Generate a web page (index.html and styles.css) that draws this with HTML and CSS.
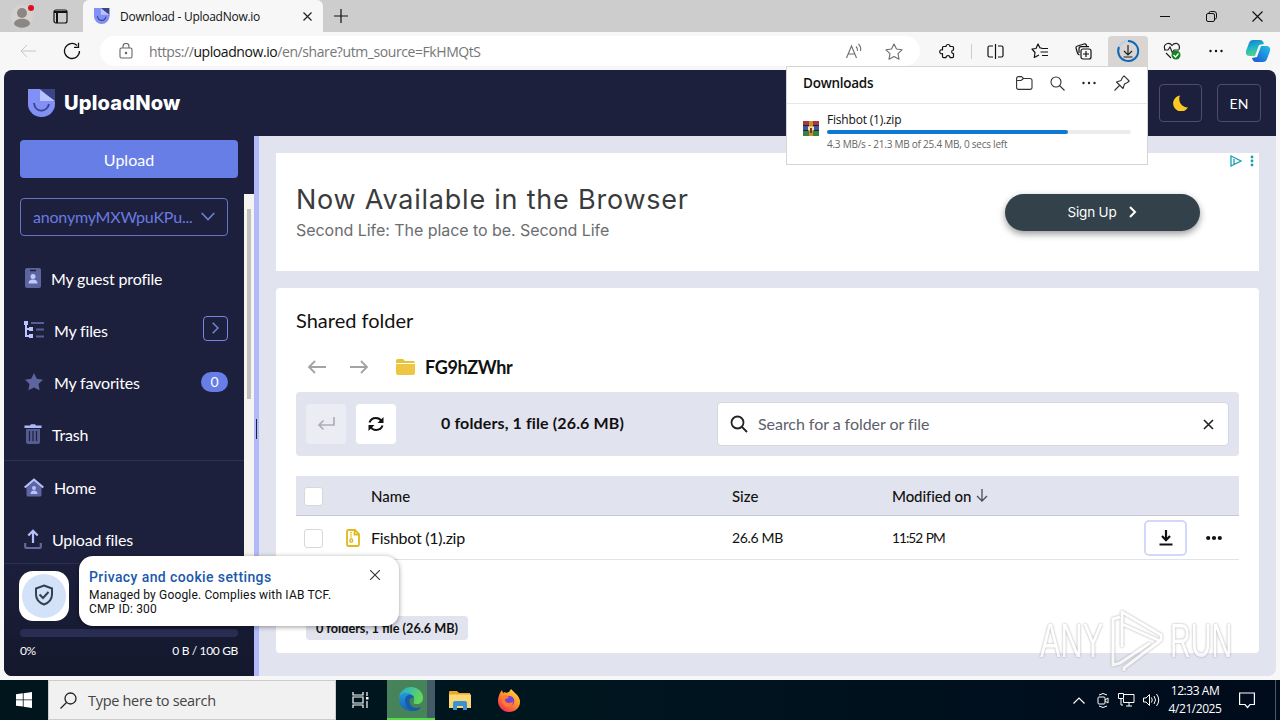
FILE: index.html
```html
<!DOCTYPE html>
<html lang="en">
<head>
  <meta charset="UTF-8">
  <meta name="viewport" content="width=device-width, initial-scale=1">
  <title>Download - UploadNow.io</title>
  <link rel="stylesheet" href="styles.css">
</head>
<body>
  <!-- Shared logo -->
  <svg class="defs" width="0" height="0">
    <symbol id="logo" viewBox="0 0 28 28">
      <path d="M12 0H27V14Z" fill="#3c4488"/>
      <path d="M0 0H12L27 13V15A13.5 13 0 0 1 0 15Z" fill="#8290f5"/>
      <path d="M12 1V12H27Z" fill="#b9c3ff"/>
      <path d="M6 14C7 24 19 24 21 15" fill="none" stroke="#3c4690" stroke-width="2"/>
    </symbol>
  </svg>

  <!-- Browser tabs -->
  <div class="titlebar">
    <div class="tab-tools">
      <svg class="avatar" width="28" height="28" viewBox="0 0 28 28">
        <circle cx="14" cy="14" r="11" fill="#d6d2cf"/>
        <circle cx="14" cy="11" r="5" fill="#8c8784"/>
        <path d="M6 22c0-7 16-7 16 0c-3 5-13 5-16 0z" fill="#8c8784"/>
        <circle cx="23" cy="6" r="3" fill="#d9121c"/>
      </svg>
      <svg width="15" height="15" viewBox="0 0 15 15" fill="none" stroke="#111" stroke-width="1.2">
        <rect x="1" y="1" width="13" height="13" rx="2"/><path d="M1 3h13M4 4v10" stroke-width="2"/>
      </svg>
    </div>
    <div class="tab">
      <svg width="16" height="16"><use href="#logo"/></svg>
      <span class="tab-title">Download - UploadNow.io</span>
      <svg width="9" height="9" viewBox="0 0 9 9" stroke="#222" stroke-width="1.2"><path d="M.5.5l8 8M8.500.5l-8 8"/></svg>
    </div>
    <svg class="new-tab" width="14" height="14" viewBox="0 0 14 14" stroke="#111" stroke-width="1.2"><path d="M7 0v14M0 7h14"/></svg>
    <div class="window-buttons">
      <svg class="minimize" width="10" height="10" viewBox="0 0 10 10" stroke="#111"><path d="M0 5.500h10"/></svg>
      <svg width="11" height="11" viewBox="0 0 11 11" fill="none" stroke="#111"><rect x=".5" y="2.500" width="8" height="8" rx="1.500"/><path d="M3 2.500V2Q3 .5 4.500.5H8Q10.500.5 10.500 3v3.500Q10.500 8 9 8"/></svg>
      <svg width="11" height="11" viewBox="0 0 11 11" stroke="#111" stroke-width="1.200"><path d="M.5.5l10 10M10.500.5l-10 10"/></svg>
    </div>
  </div>

  <!-- Browser toolbar -->
  <div class="toolbar">
    <div class="nav-btn"><svg width="16" height="14" viewBox="0 0 16 14" fill="none" stroke="#c6c6c6"><path d="M16 7H1M7 1L1 7l6 6"/></svg></div>
    <div class="nav-btn"><svg width="18" height="18" viewBox="0 0 18 18" fill="none" stroke="#111" stroke-width="1.300"><path d="M16.500 9a7.500 7.500 0 1 1-2.500-5.600M15.500.8v4.500h-4.500"/></svg></div>
    <div class="address">
      <svg width="14" height="16" viewBox="0 0 14 16" fill="none" stroke="#666" stroke-width="1.100"><rect x="1" y="5" width="12" height="10" rx="1.500"/><path d="M4 5V3.500a3 3 0 0 1 6 0V5"/><circle cx="7" cy="10" r=".7" fill="#666"/></svg>
      <span class="url">https://<b>uploadnow.io</b>/en/share?utm_source=FkHMQtS</span>
      <svg class="read" width="18" height="16" viewBox="0 0 18 16" fill="none" stroke="#6d6d6d" stroke-width="1.100"><path d="M1.500 15L6.500 3l5 12M3.200 11h6.600M11 3.500q2 2 1.500 4.500M13.500 1q3 3 2 7"/></svg>
      <svg class="fav" width="18" height="17" viewBox="0 0 18 17" fill="none" stroke="#6d6d6d" stroke-width="1.100" stroke-linejoin="round"><path d="M9 1l2.500 5 5.500.8-4 3.900 1 5.500L9 13.600l-5 2.600 1-5.500L1 6.800 6.500 6z"/></svg>
    </div>
    <div class="tools">
      <div class="tool"><svg width="17" height="17" viewBox="0 0 17 17" fill="none" stroke="#111" stroke-width="1.200" stroke-linejoin="round"><path d="M4.500 3.500H7a2 2 0 0 1 4 0h2.500q1 0 1 1V7a1.800 1.800 0 1 0 0 3.600v3q0 1-1 1H11a2 2 0 0 0-4 0H4.500q-1 0-1-1V10.600a2 2 0 1 1 0-3.700V4.500q0-1 1-1z"/></svg></div>
      <div class="sep"></div>
      <div class="tool"><svg width="17" height="15" viewBox="0 0 17 15" fill="none" stroke="#111" stroke-width="1.200"><path d="M6 2H2.500Q1 2 1 3.500v8Q1 13 2.500 13H6M11 2h3.500Q16 2 16 3.500v8q0 1.500-1.500 1.500H11M8.500 0v15"/></svg></div>
      <div class="tool"><svg width="17" height="16" viewBox="0 0 17 16" fill="none" stroke="#111" stroke-width="1.200" stroke-linejoin="round"><path d="M11 5L9 5 7 1 5 5.500 1 6l3 3.500-.7 5L8 12M10.500 5.500H17M9.500 9H17M11 12.500h6"/></svg></div>
      <div class="tool"><svg width="17" height="17" viewBox="0 0 17 17" fill="none" stroke="#111" stroke-width="1.200"><rect x="6" y="6" width="10" height="10" rx="2"/><path d="M11 8v6M8 11h6M4.500 12Q3 11.500 2.500 10L1 5Q.7 3.500 2.500 3L9 1q2-.5 2.500 1.500l.3 1M4 10V6q0-2.300 2-2.300h8"/></svg></div>
      <div class="tool active"><svg width="24" height="24" viewBox="0 0 24 24" fill="none" stroke="#222"><circle cx="12" cy="12" r="10" stroke="#b8cfe4" stroke-width="2"/><path d="M12 2a10 10 0 1 1-9 6" stroke="#1268b3" stroke-width="2"/><path d="M12 6v9.500M8 12l4 4 4-4M7.500 18h9" stroke-width="1.200"/></svg></div>
      <div class="tool"><svg width="18" height="18" viewBox="0 0 18 18" fill="none" stroke="#222" stroke-width="1.200"><path d="M2 8Q0 2.500 4.500 1.500 7.500 1 9 3.500 11 1 14 1.500q3.500 1.500 2 6M1 8h4l2-3 2.500 6L11 8h5M3 11l5 5"/><circle cx="13" cy="13" r="4.500" fill="#168322" stroke="none"/><path d="M10.500 13l2 2 3-3.500" stroke="#fff"/></svg></div>
      <div class="tool"><svg width="14" height="4" viewBox="0 0 14 4" fill="#111"><circle cx="1.500" cy="2" r="1.200"/><circle cx="7" cy="2" r="1.200"/><circle cx="12.500" cy="2" r="1.200"/></svg></div>
      <div class="tool copilot">
        <svg width="26" height="24" viewBox="0 0 26 24">
          <defs>
            <linearGradient id="cpA" x1="0" y1="0" x2=".3" y2="1"><stop offset="0" stop-color="#1c74d8"/><stop offset=".5" stop-color="#18b5c8"/><stop offset="1" stop-color="#58d08a"/></linearGradient>
            <linearGradient id="cpB" x1="1" y1="0" x2="0" y2="1"><stop offset="0" stop-color="#20c3e5"/><stop offset="1" stop-color="#1d52d8"/></linearGradient>
          </defs>
          <path d="M8 1h7q3 0 4 4l-5 1-4 11H5q-5 0-4-5L4 4q1-3 4-3z" fill="url(#cpA)"/>
          <path d="M18 23h-7q-3 0-4-4l5-1 4-11h5q5 0 4 5l-3 8q-1 3-4 3z" fill="url(#cpB)"/>
        </svg>
      </div>
    </div>
  </div>

  <!-- UploadNow page -->
  <div class="page">
    <header class="site-header">
      <div class="brand"><svg width="28" height="28"><use href="#logo"/></svg><span>UploadNow</span></div>
      <div class="header-actions">
        <div class="hbtn"><svg width="16" height="16" viewBox="0 0 16 16"><path d="M7 .5A8 8 0 1 0 15 12.500 8.500 8.500 0 0 1 7 .5z" fill="#fdc921"/></svg></div>
        <div class="hbtn lang">EN</div>
      </div>
    </header>

    <div class="layout">
      <aside class="sidebar">
        <div class="upload">Upload</div>
        <div class="side-scroll">
          <div class="menu">
            <div class="account"><span>anonymyMXWpuKPu...</span><svg width="14" height="9" viewBox="0 0 14 9" fill="none" stroke="#6f80d8" stroke-width="1.600"><path d="M.7 1L7 7.500 13.300 1"/></svg></div>
            <a class="item i-profile"><svg width="16" height="20" viewBox="0 0 16 20"><rect width="16" height="20" rx="2" fill="#5d659f"/><path d="M5 2.500h6" stroke="#1c203c" stroke-width="1.500"/><circle cx="8" cy="8.500" r="2.500" fill="#bfc8ff"/><path d="M3.500 15.500q0-4 4.500-4t4.500 4z" fill="#bfc8ff"/></svg><span>My guest profile</span></a>
            <a class="item"><svg width="20" height="18" viewBox="0 0 20 18" fill="none"><path d="M2 1v14h4M2 8h4" stroke="#bac5ff" stroke-width="2"/><path d="M0 0h4v4H0zM5 6h4v4H5zM5 13h4v4H5z" fill="#bac5ff"/><path d="M7 2h13M12 8.500h8M12 15.500h8" stroke="#575e96" stroke-width="2"/></svg><span>My files</span><i class="open"><svg width="7" height="12" viewBox="0 0 7 12" fill="none" stroke="#7685df" stroke-width="1.500"><path d="M.7.7L6 6 .7 11.300"/></svg></i></a>
            <a class="item"><svg width="20" height="20" viewBox="0 0 20 20"><path d="M10 1l2.800 5.800 6.200.9-4.500 4.400 1.100 6.200L10 15.400l-5.600 2.900 1.100-6.200L1 7.700l6.200-.9z" fill="#5e64a0"/></svg><span>My favorites</span><i class="count">0</i></a>
            <a class="item"><svg width="18" height="20" viewBox="0 0 18 20"><path d="M2 5h14v13q0 2-2 2H4q-2 0-2-2z" fill="#555c92"/><path d="M5.500 7v10M9 7v10M12.500 7v10" stroke="#1c203c" stroke-width="1.200"/><path d="M.5 1.500H6L7 .3h4l1 1.200h5.500V4H.5z" fill="#aeb9f5"/></svg><span>Trash</span></a>
            <div class="rule"></div>
            <a class="item"><svg width="20" height="19" viewBox="0 0 20 19"><path d="M2.500 9L10 3l7.500 6v8q0 1.500-1.500 1.500H4Q2.500 18.500 2.500 17z" fill="#5e66a0"/><path d="M.7 9.500L10 1.700l9.300 7.800" fill="none" stroke="#b6c1ff" stroke-width="2.200"/><circle cx="10" cy="10" r="2" fill="#b6c1ff"/><path d="M6.500 16q0-3.500 3.500-3.500t3.500 3.500z" fill="#b6c1ff"/></svg><span>Home</span></a>
            <a class="item"><svg width="18" height="20" viewBox="0 0 18 20" fill="none"><path d="M1.200 14v3.500q0 1.500 1.500 1.500h12.600q1.500 0 1.500-1.500V14" stroke="#626a9f" stroke-width="2.200"/><path d="M9 14V2M4.300 6.500L9 1.800l4.700 4.700" stroke="#b6c1ff" stroke-width="2.200"/></svg><span>Upload files</span></a>
          </div>
          <div class="scrollbar"><div class="thumb"></div></div>
        </div>
        <div class="storage">
          <div class="meter"></div>
          <div class="storage-text"><span>0%</span><span>0 B / 100 GB</span></div>
        </div>
      </aside>
      <div class="splitter"><div class="grip"></div></div>

      <main class="content">
        <section class="ad">
          <div class="ad-text">
            <h1>Now Available in the Browser</h1>
            <p>Second Life: The place to be. Second Life</p>
          </div>
          <div class="signup"><span>Sign Up</span><svg width="8" height="12" viewBox="0 0 8 12" fill="none" stroke="#fff" stroke-width="2"><path d="M1 1l5 5-5 5"/></svg></div>
          <div class="adchoices">
            <svg width="12" height="12" viewBox="0 0 12 12" fill="none" stroke="#16a0b8" stroke-width="1.300"><path d="M1 1l10 5-10 5zM4 4v5"/></svg>
            <svg width="4" height="12" viewBox="0 0 4 12" fill="#16a0b8"><circle cx="2" cy="2" r="1.400"/><circle cx="2" cy="6" r="1.400"/><circle cx="2" cy="10" r="1.400"/></svg>
          </div>
        </section>

        <section class="card">
          <h2>Shared folder</h2>
          <div class="crumbs">
            <svg width="20" height="14" viewBox="0 0 20 14" fill="none" stroke="#a3a3a3" stroke-width="1.800"><path d="M19 7H2M8 1L2 7l6 6"/></svg>
            <svg width="20" height="14" viewBox="0 0 20 14" fill="none" stroke="#a3a3a3" stroke-width="1.800"><path d="M1 7h17M12 1l6 6-6 6"/></svg>
            <svg class="folder" width="19" height="16" viewBox="0 0 19 16"><path d="M0 2Q0 0 2 0h5l2 2h8q2 0 2 2H0z" fill="#e9c233"/><path d="M0 5h19v9q0 2-2 2H2q-2 0-2-2z" fill="#eec643"/></svg>
            <b>FG9hZWhr</b>
          </div>
          <div class="actions">
            <div class="abtn dim"><svg width="18" height="14" viewBox="0 0 18 14" fill="none" stroke="#adafb8" stroke-width="1.700"><path d="M17 0v8H2M6.500 3.500L2 8l4.500 4.500"/></svg></div>
            <div class="abtn"><svg width="16" height="16" viewBox="0 0 16 16" fill="none" stroke="#111" stroke-width="2"><path d="M1.500 6.500Q3 2 8 2q3.500 0 5.500 3M14.500 9.500Q13 14 8 14q-3.500 0-5.500-3"/><path d="M15.500 1v6h-6zM.5 15V9h6z" fill="#111" stroke="none"/></svg></div>
            <span class="summary">0 folders, 1 file (26.6 MB)</span>
            <div class="search">
              <svg width="18" height="18" viewBox="0 0 18 18" fill="none" stroke="#222" stroke-width="1.800"><circle cx="7.500" cy="7.500" r="6"/><path d="M12 12l5 5"/></svg>
              <span>Search for a folder or file</span>
              <svg width="11" height="11" viewBox="0 0 11 11" stroke="#222" stroke-width="1.600"><path d="M1 1l9 9M10 1l-9 9"/></svg>
            </div>
          </div>
          <div class="table">
            <div class="row head">
              <i class="check"></i><span></span><span class="th">Name</span><span class="th">Size</span>
              <span class="th mod">Modified on <svg width="12" height="13" viewBox="0 0 12 13" fill="none" stroke="#4b4e58" stroke-width="1.300"><path d="M6 0v12M1 7l5 5 5-5"/></svg></span>
            </div>
            <div class="row">
              <i class="check"></i>
              <svg width="14" height="18" viewBox="0 0 14 18" fill="none" stroke="#dfb91c" stroke-width="1.800"><path d="M1 2.500Q1 1 2.500 1H9l4 4v10.500q0 1.500-1.500 1.500h-9Q1 17 1 15.500zM8.500 1v4.500H13"/><path d="M5 3v6" stroke-dasharray="1.200 1"/><rect x="4" y="10" width="2.500" height="3" rx=".8" stroke-width="1.400"/></svg>
              <span class="filename">Fishbot (1).zip</span><span class="filesize">26.6 MB</span><span class="when">11:52 PM</span>
              <div class="dl"><svg width="16" height="16" viewBox="0 0 16 16" fill="none" stroke="#111" stroke-width="2.200"><path d="M8 0v9M4 6l4 4.200L12 6M1.500 14.500h13"/></svg></div>
              <svg class="more" width="16" height="6" viewBox="0 0 16 6" fill="#111"><circle cx="2.200" cy="3" r="2.100"/><circle cx="8" cy="3" r="2.100"/><circle cx="13.800" cy="3" r="2.100"/></svg>
            </div>
          </div>
          <div class="pill">0 folders, 1 file (26.6 MB)</div>
        </section>
      </main>
    </div>
  </div>

  <!-- Windows taskbar -->
  <div class="taskbar">
    <div class="start"><svg width="16" height="16" viewBox="0 0 16 16" fill="#fff"><path d="M0 2.200L6.800 1.300V7.500H0zM7.600 1.200L16 0v7.500H7.600zM0 8.300h6.800v6.300L0 13.700zM7.600 8.300H16V16l-8.400-1.200z"/></svg></div>
    <div class="task-search"><svg width="17" height="17" viewBox="0 0 17 17" fill="none" stroke="#222" stroke-width="1.300"><circle cx="10.500" cy="6.500" r="5.500"/><path d="M6.500 10.500L.5 16.500"/></svg><span>Type here to search</span></div>
    <div class="task view"><svg width="17" height="16" viewBox="0 0 17 16" fill="none" stroke="#fff" stroke-width="1.200"><path d="M1 0v3h10V0M1 16v-3h10v3M1 5h10v6H1zM15 0v4M15 9v7"/><path d="M14 5h2.500v2.500H14z" fill="#fff" stroke="none"/></svg></div>
    <div class="task edge">
      <svg width="26" height="26" viewBox="0 0 26 26">
        <defs>
          <linearGradient id="eA" x1="0" y1="0" x2="1" y2=".3"><stop offset="0" stop-color="#20a9e0"/><stop offset="1" stop-color="#63d657"/></linearGradient>
          <linearGradient id="eB" x1="0" y1="0" x2="0" y2="1"><stop offset="0" stop-color="#2098dc"/><stop offset="1" stop-color="#1a62b4"/></linearGradient>
        </defs>
        <path d="M1 12C2 5 7 1 13 1c7 0 12 5 12 11 0 4-3 6-6 6-4 0-4-1-3-3 1-5-4-8-8-8-3 0-6 2-7 5z" fill="url(#eA)"/>
        <path d="M1 12c1-4 5-5 8-5 3 0 5 2 6 4-4-1-6 2-5 6 2 5 8 6 13 4-2 3-6 4-9 4C6 25 1 20 1 12z" fill="url(#eB)"/>
        <path d="M7 14c0-3 3-6 6-5 2 0 3 2 3 3-5-1-5 3-4 6 2 4 7 5 11 3-2 3-5 4-7 4-5 0-9-5-9-11z" fill="#185ba8"/>
      </svg>
    </div>
    <div class="task"><svg width="22" height="19" viewBox="0 0 22 19"><path d="M0 1q0-1 1-1h7l2 2h11v4H0z" fill="#e9a72c"/><path d="M0 3.500h22V17H0z" fill="#fbd774"/><path d="M4 19v-7q0-2 2-2h10q2 0 2 2v7h-4v-4H8v4z" fill="#3e91d0"/></svg></div>
    <div class="task">
      <svg width="24" height="24" viewBox="0 0 24 24">
        <defs><linearGradient id="fx" x1=".9" y1="0" x2=".2" y2="1"><stop offset="0" stop-color="#ffe645"/><stop offset=".45" stop-color="#ff9626"/><stop offset="1" stop-color="#f0255c"/></linearGradient></defs>
        <path d="M3 5L5 2l1 3 2-1 1 1 3-1 2-3q2 2 4 4 5 4 5 9c0 6-5 10-11 10S1 19 1 13c0-3 1-6 2-8z" fill="url(#fx)"/>
        <circle cx="12" cy="13" r="5.300" fill="#7541d8"/><path d="M5 8q4-2 7 1-1 2-4 2 0 4 4 4 3 0 4-2 0 6-5 6-6-1-6-7z" fill="#ff7a2c"/>
      </svg>
    </div>
    <div class="tray">
      <svg width="12" height="7" viewBox="0 0 12 7" fill="none" stroke="#fff" stroke-width="1.200"><path d="M.5 6.500L6 1l5.500 5.500"/></svg>
      <svg class="cam" width="12" height="17" viewBox="0 0 12 17" fill="none" stroke="#fff"><rect x="1" y="5" width="7" height="7" rx="1"/><path d="M8 8l3-2v5L8 9M2 3q4-3 8 0M2 14q4 3 8 0"/></svg>
      <svg width="17" height="14" viewBox="0 0 17 14" fill="none" stroke="#fff"><path d="M5 1.500h11v8H5.500V6M8 13h6M11 9.500V13M.5.500h5v5h-5zM3 5.500V12h2"/></svg>
      <svg class="volume" width="17" height="14" viewBox="0 0 17 14" fill="none" stroke="#fff"><path d="M.5 5v4h2.500l3.500 3.500V1.500L3 5zM8.500 4.500q1.500 2.500 0 5M11 3q3 4 0 8M13.500 1q4.500 6 0 12"/></svg>
      <div class="clock">12:33 AM<br>4/21/2025</div>
      <svg class="notif" width="16" height="17" viewBox="0 0 16 17" fill="none" stroke="#fff" stroke-width="1.200"><path d="M.6 1h14.800v11.500H11L8.500 15.500 6 12.500H.6z"/></svg>
      <i class="peek"></i>
    </div>
  </div>

  <!-- Downloads flyout -->
  <div class="downloads">
    <div class="dl-head">
      <b>Downloads</b>
      <svg width="17" height="14" viewBox="0 0 17 14" fill="none" stroke="#333" stroke-width="1.100"><path d="M.6 2.500Q.6.6 2.500.6h3L7.500 2.500H14q2 0 2 2v7q0 1.900-2 1.900H2.500Q.6 13.400.6 11.500zM.6 4.500H5l2.500-2"/></svg>
      <svg width="15" height="15" viewBox="0 0 15 15" fill="none" stroke="#333" stroke-width="1.100"><circle cx="6" cy="6" r="5"/><path d="M9.500 9.500l5 5"/></svg>
      <svg width="14" height="4" viewBox="0 0 14 4" fill="#222"><circle cx="1.500" cy="2" r="1.200"/><circle cx="7" cy="2" r="1.200"/><circle cx="12.500" cy="2" r="1.200"/></svg>
      <svg class="pin" width="16" height="16" viewBox="0 0 16 16" fill="none" stroke="#333" stroke-width="1.100" stroke-linejoin="round"><path d="M10 .8L15.200 6 13.500 7.500 10.500 9 9 13.500 2.500 7 7 5.500 8.500 2.500zM5.500 10.500L.5 15.500"/></svg>
    </div>
    <div class="dl-item">
      <svg width="16" height="15" viewBox="0 0 16 15"><path d="M0 0h16v5H0z" fill="#a23a3f"/><path d="M0 5h16v5H0z" fill="#40569e"/><path d="M0 10h16v5H0z" fill="#338246"/><path d="M0 4.500h16M0 9.500h16" stroke="#2b2027"/><path d="M6 0h4v15H6z" fill="#d78930"/><path d="M5 5.500h6v4H5z" fill="#eee0a8"/><path d="M7 7h2v5H7z" fill="#713b25"/></svg>
      <div class="dl-info">
        <div class="dl-name">Fishbot (1).zip</div>
        <div class="dl-bar"><div class="dl-fill"></div></div>
        <div class="dl-status">4.3 MB/s - 21.3 MB of 25.4 MB, 0 secs left</div>
      </div>
    </div>
  </div>

  <!-- Privacy notice -->
  <div class="privacy-icon"><div><svg width="20" height="22" viewBox="0 0 20 22" fill="none" stroke="#33414e" stroke-width="2"><path d="M10 1.500l8 3v6q0 7-8 10-8-3-8-10v-6zM5.500 10.500l3.500 3.500 5.500-6"/></svg></div></div>
  <div class="privacy">
    <div>
      <div class="privacy-title">Privacy and cookie settings</div>
      <div class="privacy-text">Managed by Google. Complies with IAB TCF.<br>CMP ID: 300</div>
    </div>
    <svg width="10" height="10" viewBox="0 0 10 10" stroke="#333" stroke-width="1.100"><path d="M0 0l10 10M10 0L0 10"/></svg>
  </div>

  <!-- Watermark -->
  <div class="watermark">
    <span class="any">ANY</span>
    <svg width="56" height="64" viewBox="0 0 56 64" fill="none" stroke="#fff" stroke-width="3" stroke-linejoin="round"><path d="M14 38V3l39 23v5L16 59v3M14 15l38 17M12 8l-7 2v46l7-2 30-20"/></svg>
    <span class="run">RUN</span>
  </div>
</body>
</html>
```

FILE: styles.css
```css
/* Global Styles */
* {
  box-sizing: border-box;
  margin: 0;
  padding: 0;
}
body {
  width: 1280px;
  height: 720px;
  overflow: hidden;
  display: flex;
  flex-direction: column;
  position: relative;
  background: #f7f7f7;
  color: #111;
  font-family: "Open Sans", "Noto Sans", sans-serif;
  font-size: 12px;
}
svg {
  display: block;
  flex: none;
}
i {
  font-style: normal;
}
span, b, h1, h2, p {
  white-space: nowrap;
}
.defs {
  position: absolute;
}
/* Browser tabs */
.titlebar {
  height: 32px;
  display: flex;
  align-items: center;
  background: #cdcdcd;
}
.tab-tools {
  width: 83px;
  height: 32px;
  padding: 0 0 0 8px;
  display: flex;
  align-items: center;
  gap: 17px;
}
.tab {
  width: 240px;
  height: 32px;
  padding: 0 11px;
  display: flex;
  align-items: center;
  background: #f7f7f7;
  border-radius: 6px 6px 0 0;
}
.tab-title {
  flex: 1;
  margin-left: 10px;
  letter-spacing: -0.27px;
}
.new-tab {
  margin-left: 11px;
}
.window-buttons {
  margin-left: auto;
  margin-right: 17px;
  display: flex;
  align-items: center;
  gap: 35px;
}
.minimize {
  margin-right: 1px;
}
/* Browser toolbar */
.toolbar {
  height: 38px;
  padding-left: 6px;
  display: flex;
  align-items: center;
}
.nav-btn {
  width: 44px;
  display: flex;
  justify-content: center;
}
.address {
  width: 820px;
  height: 30px;
  margin-left: 6px;
  padding: 0 17px 0 19px;
  display: flex;
  align-items: center;
  background: #fff;
  border-radius: 15px;
}
.url {
  margin-left: 16px;
  flex: 1;
  font-size: 14px;
  letter-spacing: -0.42px;
  color: #767676;
}
.url b {
  font-weight: 400;
  color: #111;
}
.fav {
  margin-left: 22px;
}
.tools {
  display: flex;
  align-items: center;
  margin-left: 5px;
}
.tool {
  width: 44px;
  height: 30px;
  display: flex;
  align-items: center;
  justify-content: center;
}
.tool.active {
  width: 40px;
  margin: 0 2px 0 3px;
  background: #d8d5d3;
  border-radius: 4px 4px 0 0;
}
.sep {
  width: 1px;
  height: 15px;
  margin: 0 1px 0 2px;
  background: #ccc;
}
.copilot {
  width: 40px;
}
/* Page */
.page {
  height: 606px;
  margin: 0 4px 4px;
  border-radius: 8px;
  overflow: hidden;
  display: flex;
  flex-direction: column;
  background: #e1e3ee;
  font-family: Lato, sans-serif;
}
.site-header {
  height: 66px;
  padding: 0 15px 0 24px;
  display: flex;
  align-items: center;
  justify-content: space-between;
  background: #1c203c;
  color: #fff;
}
.brand {
  display: flex;
  align-items: center;
  gap: 8px;
  font-family: Inter, sans-serif;
  font-size: 20px;
  font-weight: 800;
  letter-spacing: 0.2px;
}
.header-actions {
  display: flex;
  gap: 15px;
}
.hbtn {
  width: 43px;
  height: 38px;
  display: flex;
  align-items: center;
  justify-content: center;
  border: 1px solid #4b4e66;
  border-radius: 4px;
  font-size: 14px;
}
.lang {
  width: 44px;
}
.layout {
  height: 540px;
  display: flex;
}
/* Sidebar */
.sidebar {
  width: 250px;
  display: flex;
  flex-direction: column;
  background: #1c203c;
  color: #fff;
}
.upload {
  width: 218px;
  height: 38px;
  margin: 4px 16px 16px;
  border-radius: 4px;
  background: #667ee5;
  text-align: center;
  font-size: 16px;
  line-height: 39px;
}
.side-scroll {
  height: 369px;
  display: flex;
  overflow: hidden;
}
.menu {
  width: 240px;
  padding-top: 4px;
}
.account {
  width: 208px;
  height: 38px;
  margin: 0 16px 16px;
  padding: 0 12px 1px;
  display: flex;
  align-items: center;
  justify-content: space-between;
  border: 1px solid #6674c4;
  border-radius: 4px;
  color: #6a7be0;
  font-size: 16px;
  letter-spacing: -0.2px;
}
.item {
  height: 52px;
  padding: 0 16px 0 20px;
  display: flex;
  align-items: center;
  gap: 10px;
  font-size: 16px;
  letter-spacing: -0.17px;
}
.i-profile {
  padding-left: 21px;
}
.open {
  width: 25px;
  height: 25px;
  margin: -4px 0 0 auto;
  display: flex;
  align-items: center;
  justify-content: center;
  border: 1px solid #7685df;
  border-radius: 4px;
}
.count {
  width: 27px;
  height: 20px;
  margin-left: auto;
  border-radius: 10px;
  background: #667ee5;
  text-align: center;
  font-size: 14px;
  line-height: 20px;
}
.rule {
  height: 1px;
  background: #2d3354;
}
.scrollbar {
  width: 10px;
  padding: 15px 3px;
  background: #f5f4f1;
}
.thumb {
  height: 190px;
  background: #c2c1b9;
}
.storage {
  flex: 1;
  padding: 65px 16px 0;
  border-top: 1px solid #2a3052;
  background: linear-gradient(#1b1f3b, #14182d);
}
.meter {
  height: 8px;
  border-radius: 4px;
  background: #292d52;
}
.storage-text {
  display: flex;
  justify-content: space-between;
  margin-top: 6px;
  font-size: 12px;
  letter-spacing: -0.35px;
}
.splitter {
  width: 5px;
  padding-top: 283px;
  padding-left: 2px;
  background: #b0bafa;
}
.grip {
  width: 1px;
  height: 20px;
  background: #1c203c;
}
/* Content */
.content {
  flex: 1;
  padding: 17px;
}
.ad {
  height: 118px;
  padding: 0 59px 0 20px;
  display: flex;
  justify-content: space-between;
  align-items: center;
  position: relative;
  background: #fff;
  font-family: Inter, sans-serif;
}
.ad h1 {
  font-size: 27px;
  font-weight: 400;
  line-height: 36px;
  letter-spacing: 0.78px;
  color: #3a3b3d;
}
.ad p {
  font-size: 16px;
  line-height: 25px;
  letter-spacing: -0.05px;
  color: #6c6d70;
}
.signup {
  width: 195px;
  height: 37px;
  display: flex;
  align-items: center;
  justify-content: center;
  gap: 13px;
  border-radius: 19px;
  background: #33424a;
  box-shadow: 0 3px 7px rgba(0, 0, 0, 0.4);
  color: #fff;
  font-size: 13.500px;
  letter-spacing: -0.2px;
}
.adchoices {
  position: absolute;
  top: 2px;
  right: 5px;
  display: flex;
  gap: 8px;
}
.card {
  height: 365px;
  margin-top: 17px;
  padding: 19px 20px;
  border-radius: 4px;
  background: #fff;
}
.card h2 {
  font-size: 20px;
  font-weight: 400;
  line-height: 26px;
}
.crumbs {
  height: 38px;
  margin: 15px 0 6px;
  padding-left: 11px;
  display: flex;
  align-items: center;
  gap: 22px;
  font-size: 18px;
  letter-spacing: -0.35px;
}
.folder {
  margin-left: 5px;
}
.crumbs b {
  margin-left: -12px;
  font-weight: 700;
}
.actions {
  height: 64px;
  padding: 0 10px;
  display: flex;
  align-items: center;
  gap: 10px;
  border-radius: 4px;
  background: #e1e3ee;
}
.abtn {
  width: 40px;
  height: 40px;
  display: flex;
  align-items: center;
  justify-content: center;
  border-radius: 4px;
  background: #fff;
}
.abtn.dim {
  background: #ebecf4;
}
.summary {
  margin-left: 35px;
  padding-bottom: 3px;
  font-size: 16px;
  font-weight: 700;
  letter-spacing: 0.13px;
}
.search {
  width: 512px;
  height: 44px;
  margin-left: auto;
  padding: 0 14px 0 12px;
  display: flex;
  align-items: center;
  gap: 10px;
  border: 1px solid #d3d5e0;
  border-radius: 4px;
  background: #fff;
  color: #5d606b;
  font-size: 16px;
}
.search span {
  flex: 1;
  padding-bottom: 1px;
  letter-spacing: -0.05px;
}
.table {
  margin-top: 20px;
}
.row {
  height: 44px;
  padding-left: 8px;
  display: grid;
  grid-template-columns: 42px 25px 361px 160px 252px 62px 1fr;
  align-items: center;
  border-bottom: 1px solid #e2e2e8;
  font-size: 14px;
}
.row.head {
  height: 40px;
  background: #e1e3ee;
  border-bottom: 1px solid #c5c7d2;
}
.th {
  font-size: 15px;
  font-weight: 500;
}
.mod {
  display: flex;
  align-items: center;
  gap: 5px;
  letter-spacing: -0.1px;
}
.filename {
  font-size: 16px;
  letter-spacing: -0.28px;
}
.filesize {
  letter-spacing: -0.35px;
}
.when {
  letter-spacing: -1px;
  word-spacing: 1px;
  font-size: 13.700px;
}
.check {
  width: 19px;
  height: 19px;
  margin-top: 1px;
  border: 1px solid #d7d8de;
  border-radius: 3px;
  background: #fff;
}
.dl {
  width: 43px;
  height: 36px;
  display: flex;
  align-items: center;
  justify-content: center;
  border: 2px solid #d2d8fa;
  border-radius: 5px;
}
.pill {
  width: 162px;
  height: 24px;
  margin: 56px 0 0 10px;
  border-radius: 4px;
  background: #e1e3ee;
  text-align: center;
  font-size: 12.700px;
  font-weight: 700;
  line-height: 24px;
}
/* Taskbar */
.taskbar {
  height: 40px;
  display: flex;
  background: linear-gradient(90deg, #00161c 0%, #00161f 45%, #000b1c 100%);
  color: #fff;
}
.start {
  width: 48px;
  display: flex;
  align-items: center;
  justify-content: center;
}
.task-search {
  width: 288px;
  padding-left: 11px;
  display: flex;
  align-items: center;
  gap: 11px;
  background: #f1f1f1;
  border: 1px solid #ccc;
  color: #444;
  font-size: 14.500px;
  letter-spacing: -0.3px;
}
.task {
  width: 49px;
  display: flex;
  align-items: center;
  justify-content: center;
}
.view {
  width: 51px;
  padding-right: 3px;
}
.edge {
  width: 48px;
  background: linear-gradient(90deg, #46835a 40px, #435a67 40px);
  border-bottom: 2px solid #52dd45;
}
.tray {
  margin-left: auto;
  display: flex;
  align-items: center;
  gap: 9px;
}
.cam {
  margin-left: 3px;
}
.volume {
  margin: 0 -4px 0 -1px;
}
.clock {
  width: 60px;
  text-align: center;
  font-size: 12px;
  line-height: 18px;
  letter-spacing: -0.45px;
  white-space: nowrap;
}
.notif {
  margin-left: 5px;
}
.peek {
  width: 1px;
  height: 40px;
  margin: 0 4px 0 11px;
  background: #4d5661;
}
/* Downloads flyout */
.downloads {
  position: absolute;
  left: 786px;
  top: 66px;
  width: 362px;
  height: 99px;
  background: #fff;
  border: 1px solid #d5d5d5;
}
.dl-head {
  height: 37px;
  padding: 0 17px 4px 16px;
  display: flex;
  align-items: center;
  gap: 17px;
  border-bottom: 1px solid #e6e6e6;
}
.dl-head b {
  flex: 1;
  font-size: 13.500px;
  font-weight: 600;
  letter-spacing: -0.25px;
}
.pin {
  margin-left: 1px;
}
.dl-item {
  padding: 8px 16px 0 16px;
  display: flex;
  gap: 8px;
}
.dl-item > svg {
  margin-top: 9px;
}
.dl-info {
  flex: 1;
}
.dl-name {
  line-height: 16px;
  letter-spacing: -0.2px;
}
.dl-bar {
  height: 4px;
  margin: 2px 0 3px;
  border-radius: 2px;
  background: #ececec;
}
.dl-fill {
  width: 241px;
  height: 4px;
  border-radius: 2px;
  background: #0f78d4;
}
.dl-status {
  color: #666;
  font-size: 10px;
  line-height: 15px;
  letter-spacing: -0.24px;
  white-space: nowrap;
}
/* Privacy notice */
.privacy-icon {
  position: absolute;
  left: 19px;
  top: 571px;
  width: 50px;
  height: 50px;
  padding: 3px;
  border-radius: 14px;
  background: #fff;
}
.privacy-icon div {
  width: 44px;
  height: 44px;
  padding-bottom: 2px;
  display: flex;
  align-items: center;
  justify-content: center;
  border-radius: 50%;
  background: #d3e2f8;
}
.privacy {
  position: absolute;
  left: 79px;
  top: 556px;
  width: 320px;
  height: 70px;
  padding: 12px 19px 0 10px;
  display: flex;
  justify-content: space-between;
  border-radius: 14px;
  background: #fff;
  box-shadow: 0 1px 5px rgba(0, 0, 0, 0.4);
  font-family: Roboto, sans-serif;
}
.privacy svg {
  margin-top: 2px;
}
.privacy-title {
  font-size: 14px;
  font-weight: 500;
  line-height: 18px;
  letter-spacing: 0.4px;
  color: #1b59ac;
}
.privacy-text {
  line-height: 14px;
  margin-top: 2px;
  letter-spacing: 0.16px;
}
/* Watermark */
.watermark {
  position: absolute;
  left: 1040px;
  top: 609px;
  display: flex;
  align-items: center;
  gap: 6px;
  color: #fff;
  opacity: 0.7;
  filter: drop-shadow(0 0 1px #888);
  font-family: "Liberation Sans", sans-serif;
  font-size: 48px;
  line-height: 64px;
}
.watermark span {
  width: 62px;
  transform-origin: left center;
}
.any {
  transform: scaleX(0.64);
}
.run {
  transform: scaleX(0.6);
}
```
